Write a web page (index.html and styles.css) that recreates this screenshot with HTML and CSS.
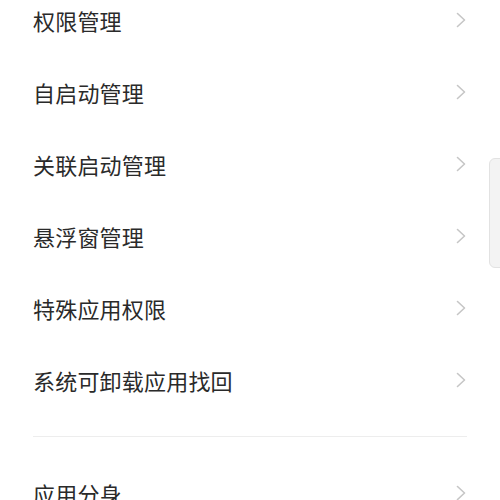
FILE: index.html
```html
<!DOCTYPE html>
<html lang="zh">
<head>
<meta charset="utf-8">
<link rel="stylesheet" href="styles.css">
</head>
<body>
<div class="page">
  <div class="list">
    <div class="row"><span class="label">权限管理</span><svg class="chev" viewBox="0 0 10 16"><path d="M1.5 1.5 L8.5 8 L1.5 14.5"/></svg></div>
    <div class="row"><span class="label">自启动管理</span><svg class="chev" viewBox="0 0 10 16"><path d="M1.5 1.5 L8.5 8 L1.5 14.5"/></svg></div>
    <div class="row"><span class="label">关联启动管理</span><svg class="chev" viewBox="0 0 10 16"><path d="M1.5 1.5 L8.5 8 L1.5 14.5"/></svg></div>
    <div class="row"><span class="label">悬浮窗管理</span><svg class="chev" viewBox="0 0 10 16"><path d="M1.5 1.5 L8.5 8 L1.5 14.5"/></svg></div>
    <div class="row"><span class="label">特殊应用权限</span><svg class="chev" viewBox="0 0 10 16"><path d="M1.5 1.5 L8.5 8 L1.5 14.5"/></svg></div>
    <div class="row"><span class="label">系统可卸载应用找回</span><svg class="chev" viewBox="0 0 10 16"><path d="M1.5 1.5 L8.5 8 L1.5 14.5"/></svg></div>
  </div>
  <div class="divider"></div>
  <div class="list">
    <div class="row"><span class="label">应用分身</span><svg class="chev" viewBox="0 0 10 16"><path d="M1.5 1.5 L8.5 8 L1.5 14.5"/></svg></div>
  </div>
  <div class="side-tab"></div>
</div>
</body>
</html>
```

FILE: styles.css
```css
html, body {
  margin: 0;
  padding: 0;
  background: #ffffff;
}
body {
  width: 500px;
  height: 500px;
  overflow: hidden;
  font-family: "Noto Sans CJK SC", "Noto Sans", sans-serif;
}
.page {
  position: relative;
  width: 500px;
  height: 500px;
  overflow: hidden;
}
.list {
  display: flex;
  flex-direction: column;
  padding: 0 34px 0 33px;
}
.list:first-child {
  margin-top: -16px;
}
.row {
  height: 72px;
  display: flex;
  align-items: center;
  justify-content: space-between;
}
.label {
  font-size: 22px;
  color: #2a2a2a;
  letter-spacing: 0.2px;
}
.chev {
  width: 10px;
  height: 16px;
  fill: none;
  stroke: #c6c6c6;
  stroke-width: 1.6;
  stroke-linecap: round;
  stroke-linejoin: round;
}
.divider {
  height: 1px;
  background: #ededed;
  margin: 20px 33px 20px 33px;
}
.side-tab {
  position: absolute;
  left: 489px;
  top: 158px;
  width: 20px;
  height: 110px;
  background: #f3f3f3;
  border: 1px solid #e2e2e2;
  border-radius: 6px;
  box-sizing: border-box;
}
```
